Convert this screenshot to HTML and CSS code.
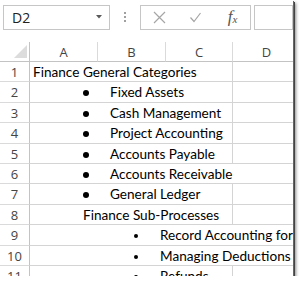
FILE: index.html
```html
<!DOCTYPE html>
<html lang="en">
<head>
    <meta charset="UTF-8">
    <meta name="viewport" content="width=device-width, initial-scale=1.0">
    <title>Finance categories</title>
    <link rel="stylesheet" href="styles.css">
</head>
<body>

<div class="sheet">
    <div class="toolbar">
        <div class="namebox">
            <span>D2</span>
            <svg class="arrow" width="6" height="4" viewBox="0 0 6 4"><path d="M0 0H6L3 3.5Z" fill="#5a5a5a"/></svg>
        </div>
        <div class="grip"><i></i><i></i><i></i></div>
        <div class="fxbuttons">
            <svg width="13" height="13" viewBox="0 0 13 13"><path d="M1 1L12 12M12 1L1 12" stroke="#a6a6a6" stroke-width="1.2" fill="none"/></svg>
            <svg width="11" height="11" viewBox="0 0 11 11"><path d="M0.5 5.5L4 9.5L10.5 1" stroke="#a6a6a6" stroke-width="1.2" fill="none"/></svg>
            <span class="fx">f<sub>x</sub></span>
        </div>
        <div class="formula"></div>
    </div>

    <div class="grid">
        <!-- column headers -->
        <div class="corner"><span class="tri"></span></div>
        <div class="colhead">A</div>
        <div class="colhead">B</div>
        <div class="colhead">C</div>
        <div class="colhead">D</div>

        <div class="rowhead">1</div>
        <div class="cell span3">Finance General Categories</div>
        <div class="cell"></div>

        <div class="rowhead">2</div>
        <div class="cell span3"><span class="dot"></span>Fixed Assets</div>
        <div class="cell"></div>

        <div class="rowhead">3</div>
        <div class="cell span3"><span class="dot"></span>Cash Management</div>
        <div class="cell"></div>

        <div class="rowhead">4</div>
        <div class="cell span3"><span class="dot"></span>Project Accounting</div>
        <div class="cell"></div>

        <div class="rowhead">5</div>
        <div class="cell span3"><span class="dot"></span>Accounts Payable</div>
        <div class="cell"></div>

        <div class="rowhead">6</div>
        <div class="cell span4"><span class="dot"></span>Accounts Receivable</div>

        <div class="rowhead">7</div>
        <div class="cell span3"><span class="dot"></span>General Ledger</div>
        <div class="cell"></div>

        <div class="rowhead">8</div>
        <div class="cell span3 sub">Finance Sub-Processes</div>
        <div class="cell"></div>

        <div class="rowhead">9</div>
        <div class="cell span4 wide"><span class="dot small"></span>Record Accounting for</div>

        <div class="rowhead">10</div>
        <div class="cell span4"><span class="dot small"></span>Managing Deductions</div>

        <div class="rowhead">11</div>
        <div class="cell span3"><span class="dot small"></span>Refunds</div>
        <div class="cell"></div>
    </div>
</div>

</body>
</html>
```

FILE: styles.css
```css
body {
    margin: 0;
    background: #fff;
    font-family: "Open Sans", Arial, sans-serif;
}

.sheet {
    width: 293px;
    height: 276px;
    overflow: hidden;
    background: #fff;
    box-shadow: 1px 1px 0 #666, 2px 2px 0 #444, 3px 3px 3px rgba(0, 0, 0, 0.45);
}

/* formula bar */
.toolbar {
    display: flex;
    align-items: center;
    height: 42px;
    padding: 0 0 0 3px;
    box-sizing: border-box;
}

.namebox,
.fxbuttons,
.formula {
    height: 25px;
    border: 1px solid #c6c6c6;
    box-sizing: border-box;
    margin-top: -8px;
}

.namebox {
    width: 110px;
    display: flex;
    align-items: center;
    justify-content: space-between;
    padding: 0 7px 0 8px;
    font-size: 14px;
    color: #222;
}

.grip {
    width: 31px;
    display: flex;
    flex-direction: column;
    align-items: center;
    gap: 2px;
    margin-top: -8px;
}

.grip i {
    width: 2px;
    height: 2px;
    background: #a0a0a0;
}

.fxbuttons {
    width: 115px;
    display: flex;
    align-items: center;
    padding: 0 0 0 12px;
}

.fxbuttons svg:first-child {
    margin-right: 24px;
}

.fxbuttons svg:nth-child(2) {
    margin-right: 27px;
}

.fx {
    font-family: "Liberation Serif", serif;
    font-style: italic;
    font-size: 17px;
    color: #555;
}

.fx sub {
    font-size: 11px;
    vertical-align: -1px;
}

.formula {
    width: 40px;
    margin-left: 3px;
}

/* spreadsheet grid */
.grid {
    display: grid;
    grid-template-columns: 30px 68px 68px 67px 68px;
    grid-template-rows: 20px;
    grid-auto-rows: 20.4px;
    font-family: Lato, "Liberation Sans", sans-serif;
    font-size: 13.6px;
    color: #000;
}

.corner,
.colhead {
    border-right: 1px solid #dadada;
    border-bottom: 1px solid #c3c3c3;
    box-sizing: border-box;
}

.corner {
    position: relative;
    border-right-color: #c3c3c3;
}

.tri {
    position: absolute;
    right: 2px;
    bottom: 3px;
    width: 0;
    height: 0;
    border-left: 13px solid transparent;
    border-bottom: 13px solid #dcdcdc;
}

.colhead {
    font-family: "Open Sans", Arial, sans-serif;
    font-size: 13px;
    color: #444;
    text-align: center;
    line-height: 19px;
    padding-top: 1px;
}

.rowhead {
    font-family: "Open Sans", Arial, sans-serif;
    font-size: 13px;
    color: #444;
    text-align: center;
    line-height: 19px;
    padding-top: 1px;
    border-right: 1px solid #c3c3c3;
    border-bottom: 1px solid #dadada;
    box-sizing: border-box;
}

.cell {
    border-right: 1px solid #d4d4d4;
    border-bottom: 1px solid #d4d4d4;
    box-sizing: border-box;
    white-space: nowrap;
    overflow: hidden;
    line-height: 19px;
    padding-top: 1px;
    padding-left: 3px;
}

.span3 { grid-column: span 3; }
.span4 { grid-column: span 4; }

.sub {
    padding-left: 53px;
}

.dot {
    display: inline-block;
    width: 6px;
    height: 6px;
    border-radius: 50%;
    background: #000;
    margin: 0 21px 1px 50px;
    vertical-align: middle;
}

.dot.small {
    width: 4px;
    height: 4px;
    margin: 0 22px 1px 101px;
}
```
